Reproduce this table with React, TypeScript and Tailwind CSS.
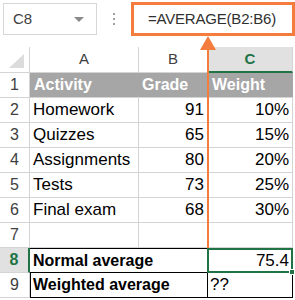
import React from 'react'

const rows = [
  { n: 1, a: 'Activity', b: 'Grade', c: 'Weight', head: true },
  { n: 2, a: 'Homework', b: '91', c: '10%' },
  { n: 3, a: 'Quizzes', b: '65', c: '15%' },
  { n: 4, a: 'Assignments', b: '80', c: '20%' },
  { n: 5, a: 'Tests', b: '73', c: '25%' },
  { n: 6, a: 'Final exam', b: '68', c: '30%' },
  { n: 7, a: '', b: '', c: '' },
]

const cell = 'h-[25px] border-r border-b border-[#d4d4d4] flex items-center'
const headCell = 'h-[25px] border-b border-[#d4d4d4] bg-[#a6a6a6] flex items-center font-bold text-[16px] text-white'

export default function App() {
  return (
    <div
      className="relative w-[295px] h-[300px] overflow-hidden bg-white"
      style={{ fontFamily: '"Liberation Sans", Arial, sans-serif' }}
    >
      {/* formula bar */}
      <div className="h-[47px] flex items-start pt-[3px] pl-[3px]">
        <div className="w-[94px] h-[32px] border border-[#d6d6d6] flex items-center justify-between pl-[9px] pr-[12px]">
          <span className="text-[15px] text-[#404040]">C8</span>
          <span className="w-0 h-0 border-l-[5px] border-r-[5px] border-t-[5px] border-l-transparent border-r-transparent border-t-[#8a8a8a]" />
        </div>
        <div className="w-[34px] h-[32px] flex flex-col items-center justify-center gap-[3px]">
          <span className="w-[2px] h-[2px] bg-[#a0a0a0]" />
          <span className="w-[2px] h-[2px] bg-[#a0a0a0]" />
          <span className="w-[2px] h-[2px] bg-[#a0a0a0]" />
        </div>
        <div className="-mt-[1px] w-[164px] h-[34px] border-[3px] border-[#f47c3c] flex items-center pl-[14px]">
          <span className="text-[15px] text-[#303030] tracking-[-0.2px]">=AVERAGE(B2:B6)</span>
        </div>
      </div>

      {/* grid */}
      <div className="grid grid-cols-[30px_109px_69px_85px] text-[17px] text-black">
        {/* column headers */}
        <div className="h-[26px] border-r border-b border-[#d4d4d4] relative">
          <svg className="absolute left-[9px] top-[7px]" width="15" height="14" viewBox="0 0 15 14">
            <polygon points="15,0 15,14 0,14" fill="#dcdcdc" />
          </svg>
        </div>
        <div className="h-[26px] border-r border-b border-[#d4d4d4] flex items-center justify-center text-[15px] text-[#404040]">A</div>
        <div className="h-[26px] border-r border-b border-[#d4d4d4] flex items-center justify-center text-[15px] text-[#404040]">B</div>
        <div className="h-[26px] border-r border-[#d4d4d4] border-b-2 border-b-[#217346] bg-[#e1e1e1] flex items-center justify-center text-[15px] font-bold text-[#217346]">C</div>

        {rows.map(r => (
          <React.Fragment key={r.n}>
            <div className={`${cell} justify-center text-[16px] text-[#404040]`}>{r.n}</div>
            {r.head ? (
              <>
                <div className={`${headCell} pl-[4px]`}>{r.a}</div>
                <div className={`${headCell} pl-[3px]`}>{r.b}</div>
                <div className={`${headCell} pl-[4px]`}>{r.c}</div>
              </>
            ) : (
              <>
                <div className={`${cell} pl-[3px]`}>{r.a}</div>
                <div className={`${cell} justify-end pr-[3px]`}>{r.b}</div>
                <div className={`${cell} justify-end pr-[3px]`}>{r.c}</div>
              </>
            )}
          </React.Fragment>
        ))}

        {/* row 8 */}
        <div className="h-[25px] border-b border-[#d4d4d4] border-r-2 border-r-[#217346] bg-[#e1e1e1] flex items-center justify-center text-[16px] font-bold text-[#217346]">8</div>
        <div className="h-[25px] border-t border-b border-black flex items-center pl-[3px] font-bold text-[16px] whitespace-nowrap">Normal average</div>
        <div className="h-[25px] border-t border-b border-r border-black" />
        <div className="h-[25px] border-t border-b border-r border-black flex items-center justify-end pr-[3px] relative">
          <div className="absolute -left-[1px] -top-[1px] -right-[1px] -bottom-[1px] border-2 border-[#217346]" />
          <div className="absolute -right-[3px] -bottom-[3px] w-[6px] h-[6px] bg-[#217346] border border-white" />
          75.4
        </div>

        {/* row 9 */}
        <div className={`${cell} justify-center text-[16px] text-[#404040]`}>9</div>
        <div className="h-[25px] border-l border-b border-black flex items-center pl-[2px] font-bold text-[16px] whitespace-nowrap">Weighted average</div>
        <div className="h-[25px] border-b border-r border-black" />
        <div className="h-[25px] border-b border-r border-black flex items-center pl-[2px]">??</div>
      </div>

      {/* callout arrow */}
      <svg className="absolute left-[199px] top-[36px]" width="18" height="213" viewBox="0 0 18 213">
        <polygon points="9,0 17,14 1,14" fill="#f47c3c" />
        <rect x="8" y="13" width="2" height="199" fill="#f47c3c" />
      </svg>
    </div>
  )
}
